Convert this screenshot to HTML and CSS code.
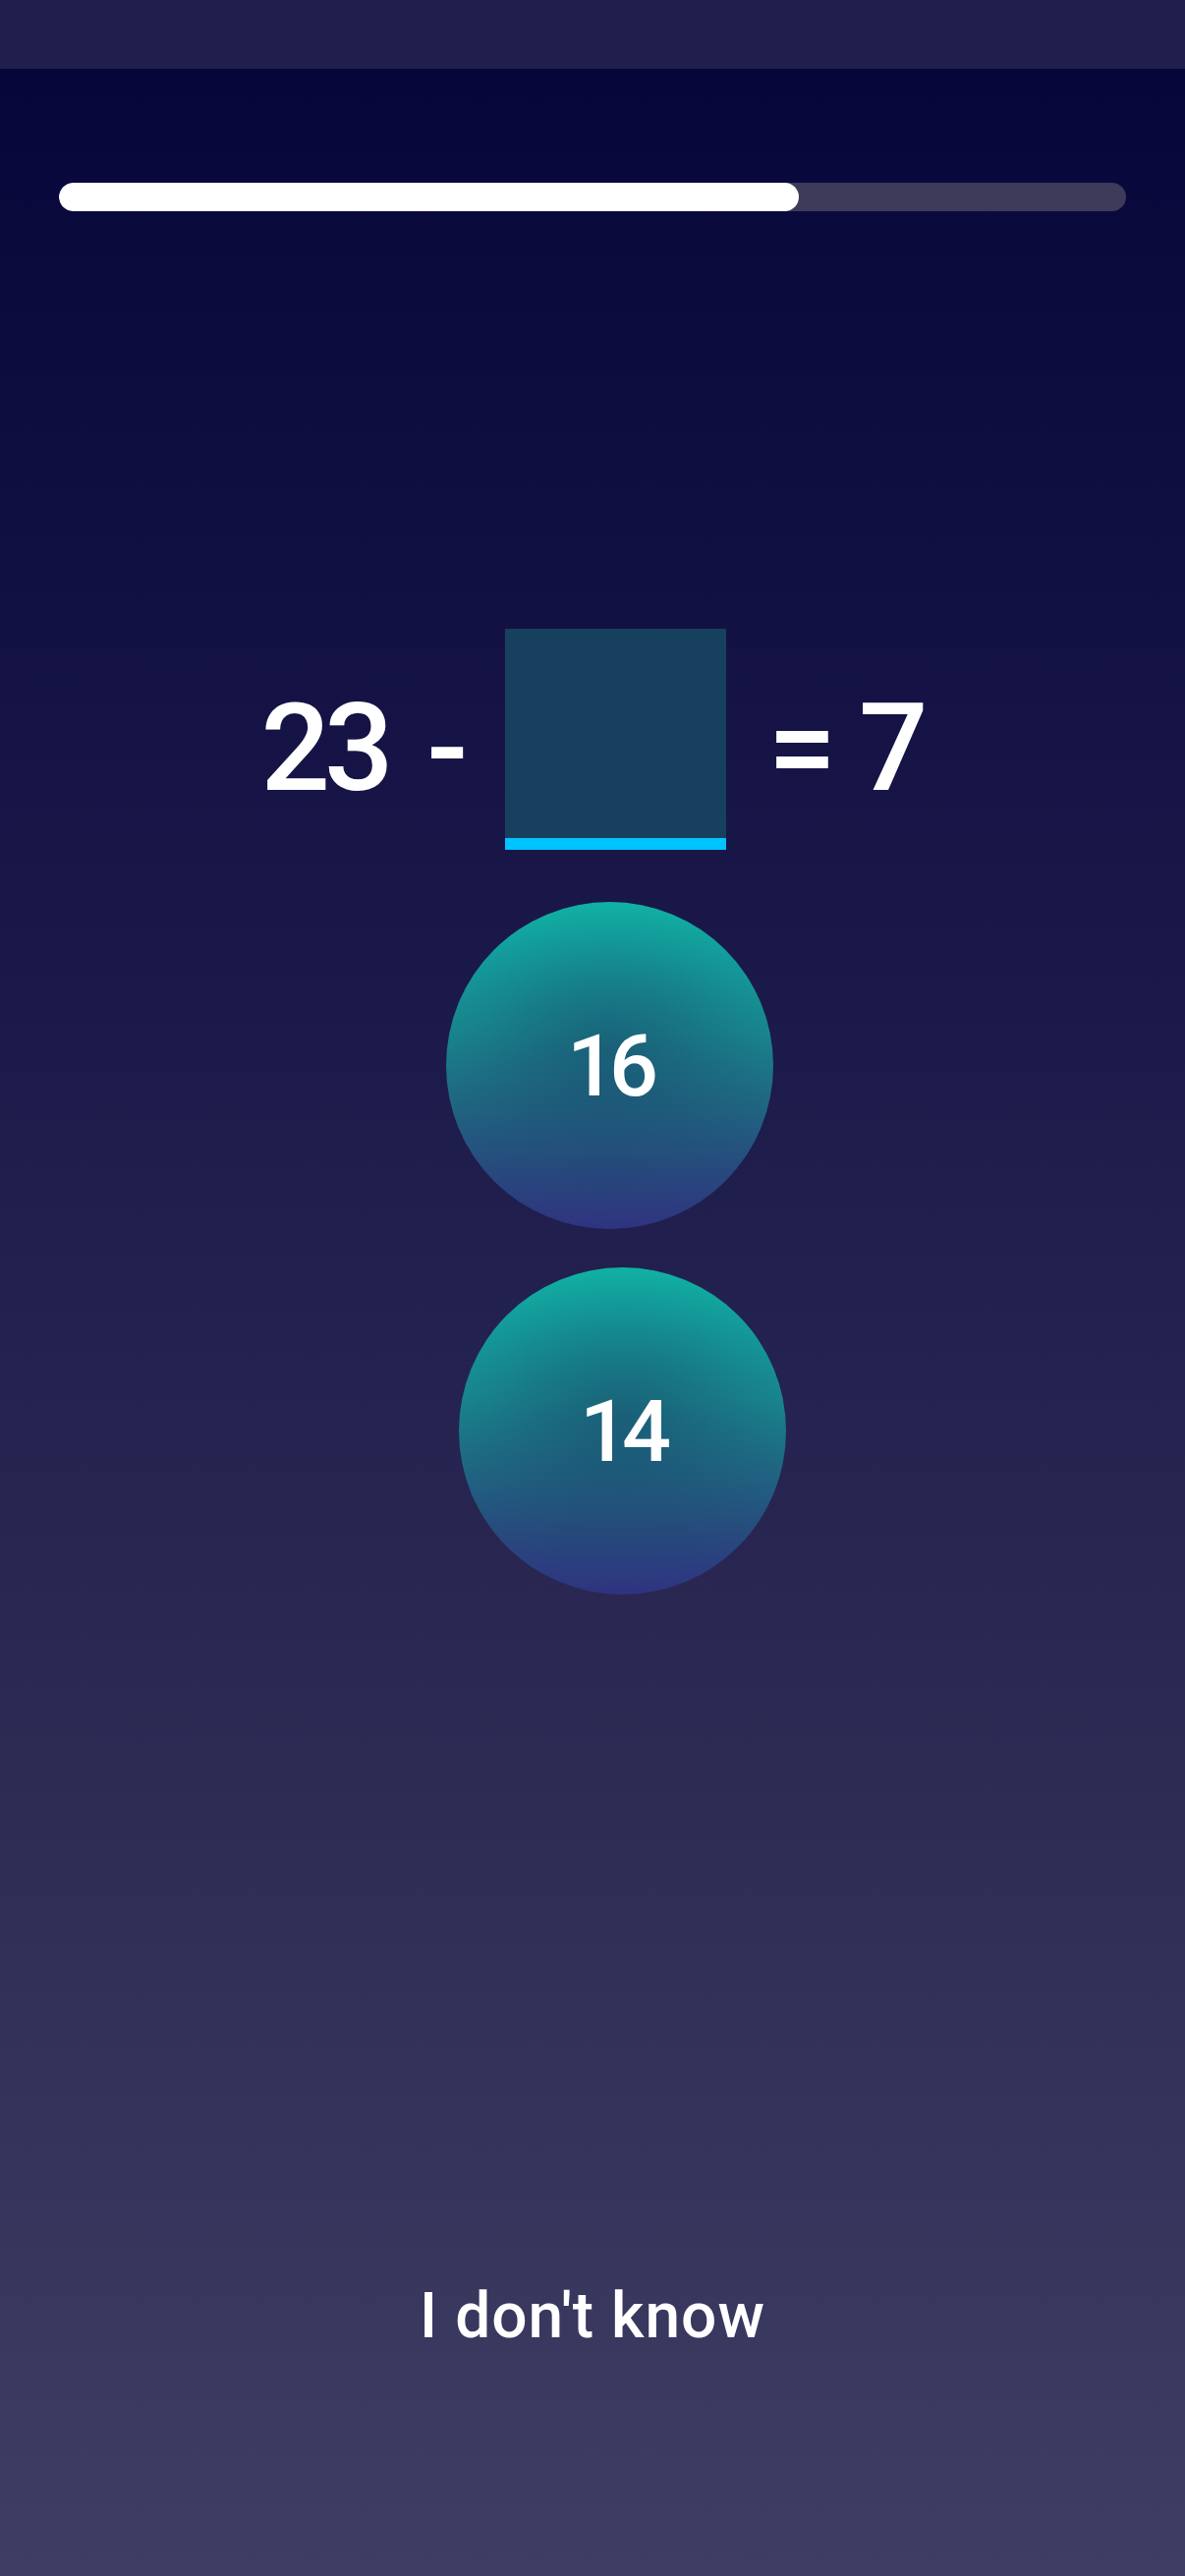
FILE: index.html
```html
<!DOCTYPE html>
<html lang="en">
<head>
<meta charset="utf-8">
<title>Quiz</title>
<link rel="stylesheet" href="styles.css">
</head>
<body>
<div class="status-bar"></div>
<main class="screen">
  <div class="progress">
    <div class="progress-fill" style="width: 69.3%"></div>
  </div>
  <div class="equation">
    <span class="eq-text eq-left"><span class="eq-tight">23</span> -</span>
    <div class="answer-box"></div>
    <span class="eq-text">= 7</span>
  </div>
  <div class="choices">
    <button class="choice choice-first">16</button>
    <button class="choice choice-second">14</button>
  </div>
  <div class="dont-know">I don't know</div>
</main>
</body>
</html>
```
FILE: styles.css
```css
html, body {
  margin: 0;
  padding: 0;
}
body {
  width: 1206px;
  height: 2622px;
  overflow: hidden;
  font-family: Roboto, "Noto Sans", sans-serif;
  color: #ffffff;
  background: #3e3c62;
}
.status-bar {
  height: 70px;
  background: #201e4d;
}
.screen {
  height: 2552px;
  display: flex;
  flex-direction: column;
  align-items: center;
  background: linear-gradient(180deg, #07063a 0%, #1a1849 35%, #2a2852 62%, #3e3d63 100%);
}
.progress {
  margin-top: 116px;
  width: 1086px;
  height: 29px;
  border-radius: 15px;
  background: #3d3a5a;
  overflow: hidden;
}
.progress-fill {
  height: 100%;
  background: #ffffff;
  border-radius: 15px;
}
.equation {
  margin-top: 425px;
  display: flex;
  align-items: center;
  gap: 42px;
  margin-left: 0;
}
.eq-text {
  font-size: 124px;
  font-weight: 500;
  letter-spacing: -4px;
  line-height: 1;
  margin-top: 18px;
  white-space: pre;
}
.eq-left {
  word-spacing: 13px;
}
.eq-tight {
  letter-spacing: -6px;
}
.answer-box {
  width: 225px;
  height: 213px;
  background: #17405f;
  border-bottom: 12px solid #00c3ff;
}
.choices {
  margin-top: 53px;
  display: flex;
  flex-direction: column;
  align-items: center;
  gap: 39px;
}
.choice {
  width: 333px;
  height: 333px;
  border: none;
  border-radius: 50%;
  padding: 0;
  color: #ffffff;
  font-family: Roboto, "Noto Sans", sans-serif;
  font-size: 88px;
  font-weight: 500;
  letter-spacing: -7px;
  line-height: 1;
  display: flex;
  align-items: center;
  justify-content: center;
  background:
    radial-gradient(ellipse 58% 50% at 50% 46%, rgba(26, 66, 104, 0.55) 0%, rgba(26, 66, 104, 0.15) 70%, rgba(26, 66, 104, 0) 100%),
    linear-gradient(180deg, #10b6a7 0%, #139f9c 20%, #188a8e 40%, #1f6a84 60%, #274c7e 80%, #2f3380 100%);
}
.choice-first {
  margin-left: 34px;
}
.choice-second {
  margin-left: 60px;
}
.dont-know {
  margin-top: 695px;
  font-size: 64px;
  font-weight: 500;
  line-height: 80px;
  letter-spacing: 1px;
}
```
